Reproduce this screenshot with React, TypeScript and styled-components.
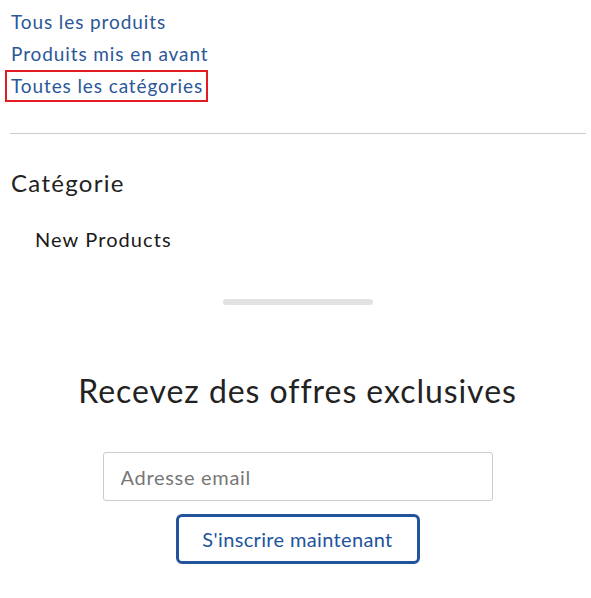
import React from 'react';
import styled, { createGlobalStyle } from 'styled-components';

const GlobalStyle = createGlobalStyle`
  html, body {
    margin: 0;
    padding: 0;
    background: #ffffff;
  }
  body {
    font-family: 'Lato', 'Liberation Sans', sans-serif;
    color: #222222;
  }
`;

const Page = styled.div`
  padding: 6px 1px 0 5px;
`;

const NavList = styled.ul`
  list-style: none;
  margin: 0;
  padding: 0;
`;

const NavItem = styled.li`
  display: block;
`;

const NavLink = styled.a<{ $active?: boolean }>`
  display: inline-block;
  font-size: 19px;
  letter-spacing: 0.9px;
  line-height: 28px;
  padding: 0 3px 0 4px;
  color: #2b5797;
  text-decoration: none;
  border: 2px solid ${({ $active }) => ($active ? '#e31b23' : 'transparent')};
`;

const Divider = styled.hr`
  border: none;
  border-top: 1px solid #cccccc;
  margin: 31px 4px 0 5px;
`;

const Section = styled.section`
  padding: 0 5px;
`;

const SectionTitle = styled.h2`
  margin: 33px 0 0 1px;
  font-size: 24px;
  letter-spacing: 1.3px;
  font-weight: 400;
  line-height: 32px;
  color: #222222;
`;

const CategoryList = styled.ul`
  list-style: none;
  margin: 28px 0 0 0;
  padding: 0 0 0 25px;
`;

const CategoryItem = styled.li`
  font-size: 20px;
  letter-spacing: 1.1px;
  line-height: 24px;
  color: #1a1a1a;
`;

const Scrollbar = styled.div`
  width: 150px;
  height: 6px;
  border-radius: 3px;
  background: #e2e2e2;
  margin: 48px auto 0 auto;
`;

const Newsletter = styled.div`
  display: flex;
  flex-direction: column;
  align-items: center;
  padding-top: 66px;
`;

const NewsletterTitle = styled.h3`
  margin: 0;
  font-size: 32px;
  letter-spacing: 0.95px;
  font-weight: 400;
  line-height: 40px;
  color: #222222;
`;

const EmailInput = styled.input`
  box-sizing: border-box;
  width: 390px;
  height: 49px;
  margin-top: 41px;
  padding: 0 16px 0 17px;
  border: 1px solid #cccccc;
  border-radius: 3px;
  font-family: inherit;
  font-size: 20px;
  letter-spacing: 0.7px;
  color: #222222;
  outline: none;

  &::placeholder {
    color: #777777;
  }
`;

const SubscribeButton = styled.button`
  box-sizing: border-box;
  width: 244px;
  height: 50px;
  margin-top: 13px;
  border: 3px solid #23549b;
  border-radius: 6px;
  background: #ffffff;
  font-family: inherit;
  font-size: 20px;
  letter-spacing: 0.35px;
  color: #23549b;
  cursor: pointer;
`;

const links = [
  { label: 'Tous les produits', active: false },
  { label: 'Produits mis en avant', active: false },
  { label: 'Toutes les catégories', active: true },
];

export default function App() {
  return (
    <>
      <GlobalStyle />
      <Page>
        <NavList>
          {links.map(link => (
            <NavItem key={link.label}>
              <NavLink href="#" $active={link.active}>
                {link.label}
              </NavLink>
            </NavItem>
          ))}
        </NavList>
        <Divider />
        <Section>
          <SectionTitle>Catégorie</SectionTitle>
          <CategoryList>
            <CategoryItem>New Products</CategoryItem>
          </CategoryList>
        </Section>
        <Scrollbar />
        <Newsletter>
          <NewsletterTitle>Recevez des offres exclusives</NewsletterTitle>
          <EmailInput type="email" placeholder="Adresse email" />
          <SubscribeButton type="button">S'inscrire maintenant</SubscribeButton>
        </Newsletter>
      </Page>
    </>
  );
}
